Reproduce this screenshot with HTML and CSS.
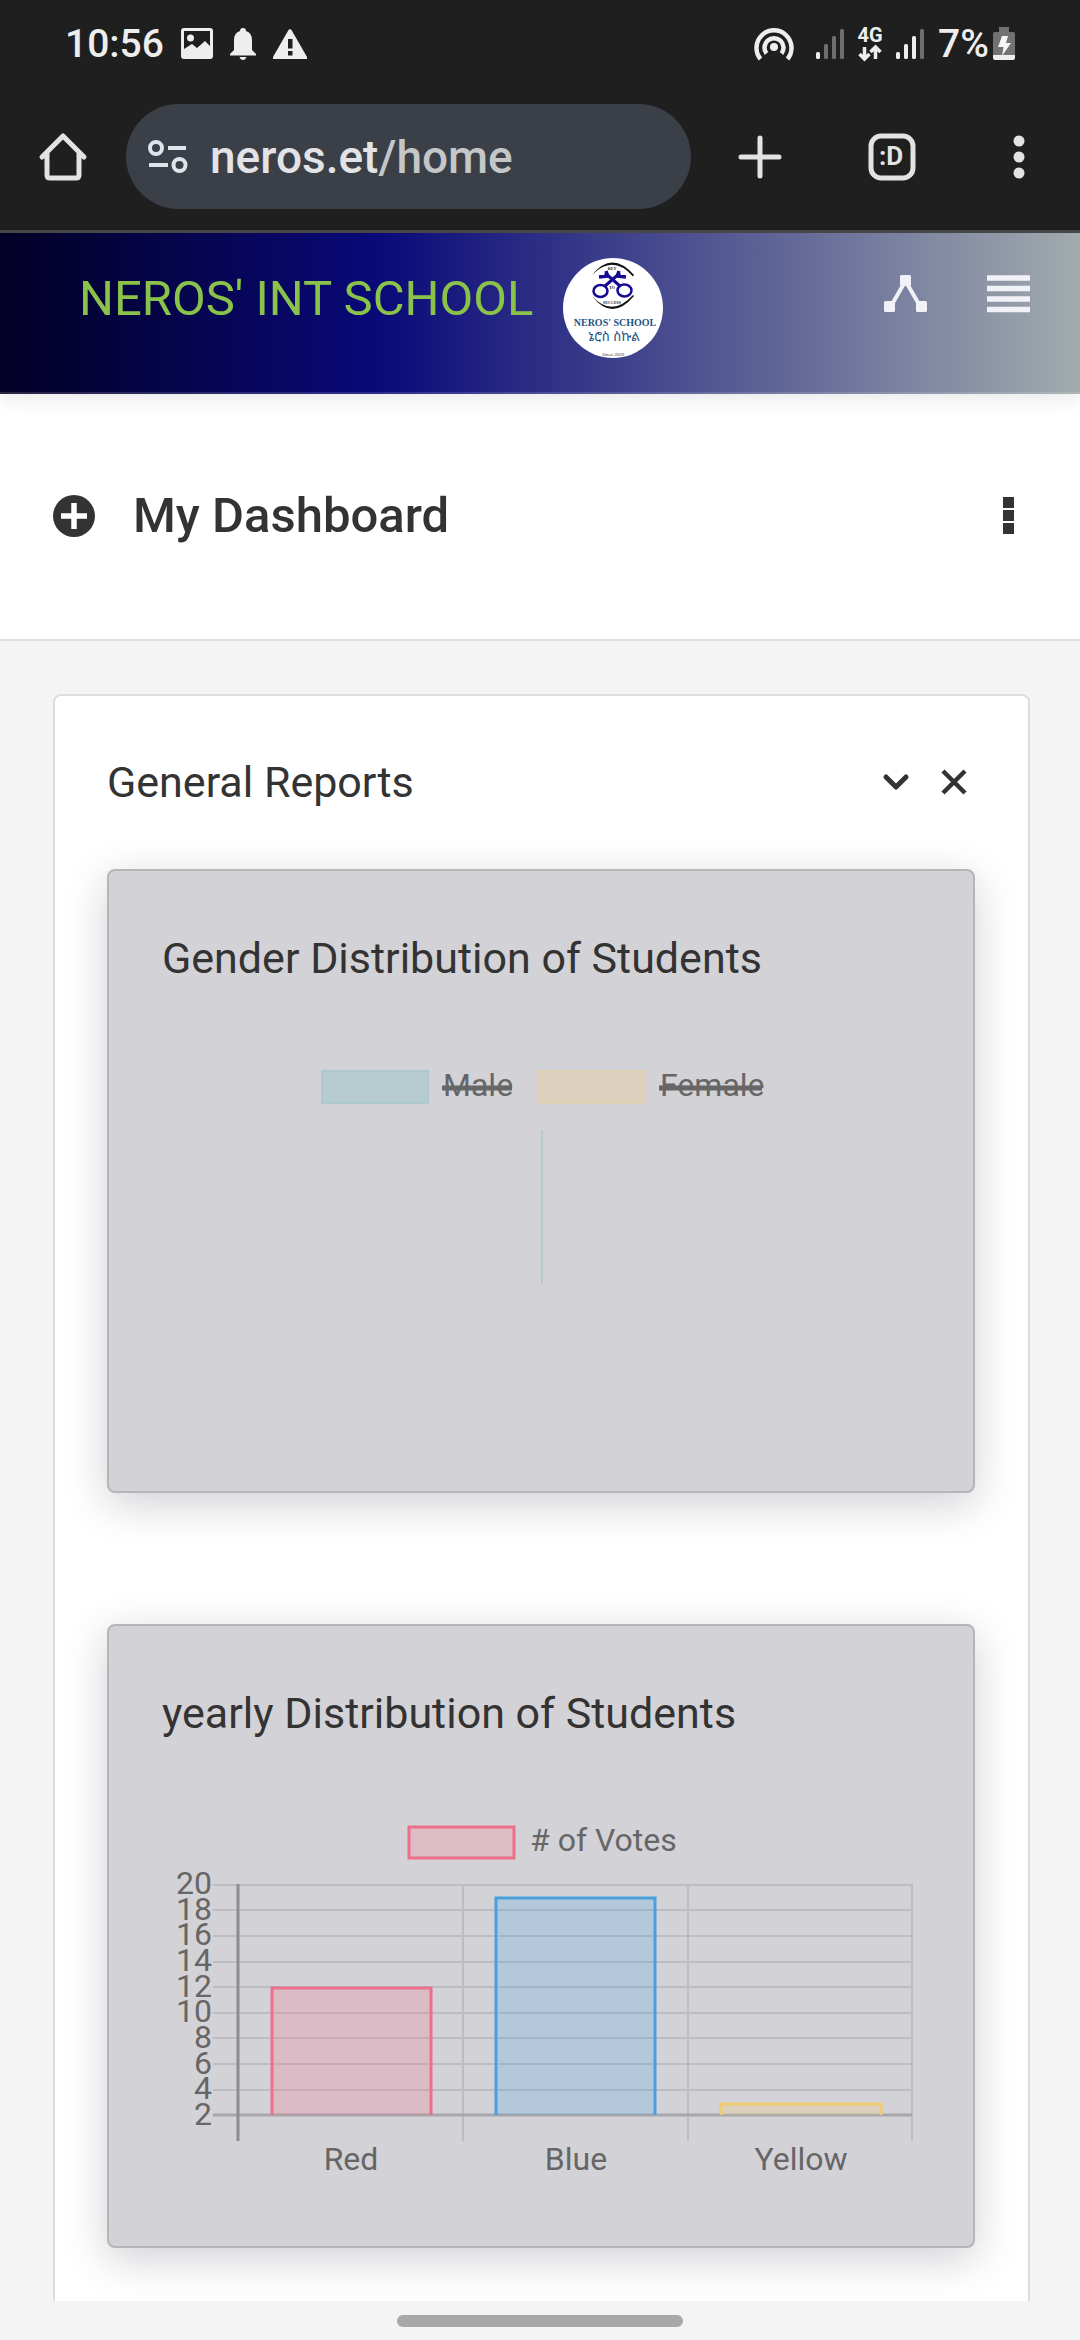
FILE: index.html
```html
<!DOCTYPE html>
<html lang="en">
<head>
<meta charset="utf-8">
<meta name="viewport" content="width=device-width, initial-scale=1">
<title>My Dashboard</title>
<link rel="stylesheet" href="styles.css">
</head>
<body>
<div class="status">
  <div class="status-left">
    <span class="status-text">10:56</span>
    <svg width="32" height="32" viewBox="0 0 32 32"><path fill="#eee" fill-rule="evenodd" d="M3 0H29Q32 0 32 3V28Q32 31 29 31H3Q0 31 0 28V3Q0 0 3 0ZM3 3V21L11 16L16 20L24 13L29 18V3Z"/><circle cx="9.500" cy="10" r="3.500" fill="#eee"/></svg>
    <svg width="26" height="32" viewBox="0 0 26 32"><path fill="#eee" d="M13 0Q16 0 16 3Q22 5 22 12V22L26 26V27.500H0V26L4 22V12Q4 5 10 3Q10 0 13 0ZM9.500 29H16.500Q15.500 32 13 32Q10.500 32 9.500 29Z"/></svg>
    <svg width="34" height="30" viewBox="0 0 34 30"><path fill="#eee" fill-rule="evenodd" d="M17 0L18.500 1L34 28V30H0V28L15.500 1ZM15 10V19.500H19.500V10ZM15 22V26.500H19.500V22Z"/></svg>
  </div>
  <div class="status-right">
    <svg class="hotspot" width="40" height="36" viewBox="0 0 40 36"><g fill="none" stroke="#eee" stroke-width="4.500"><path d="M6.500 33A17.500 17.500 0 1 1 33.500 33"/><path d="M12.500 27.500A9.500 9.500 0 1 1 27.500 27.500"/></g><circle cx="20" cy="21" r="4" fill="#eee"/></svg>
    <svg width="28" height="32" viewBox="0 0 28 32"><rect x="0" y="24" width="4" height="7" rx="1.500" fill="#eee"/><g fill="#6f6f6f"><rect x="8" y="16" width="4" height="15" rx="1.500"/><rect x="16" y="8" width="4" height="23" rx="1.500"/><rect x="24" y="1" width="4" height="30" rx="1.500"/></g></svg>
    <svg width="24" height="36" viewBox="0 0 24 36"><text x="12" y="16" text-anchor="middle" class="net">4G</text><path d="M6.500 21V33M1.500 28L6.500 33L11.500 28M17.500 33V22M12.500 26L17.500 21L22.500 26" fill="none" stroke="#eee" stroke-width="3.500"/></svg>
    <svg width="28" height="32" viewBox="0 0 28 32"><g fill="#eee"><rect x="0" y="24" width="4" height="7" rx="1.500"/><rect x="8" y="16" width="4" height="15" rx="1.500"/><rect x="16" y="8" width="4" height="23" rx="1.500"/></g><rect x="24" y="1" width="4" height="30" rx="1.500" fill="#6f6f6f"/></svg>
    <span class="battery"><span class="status-text">7%</span>
    <svg width="22" height="34" viewBox="0 0 22 34"><path fill="#727272" d="M6 0H16V5H20Q22 5 22 7V28H0V7Q0 5 2 5H6Z"/><path fill="#eee" d="M0 28H22V31Q22 33 20 33H2Q0 33 0 31Z"/><path fill="#f5f5f5" d="M9 9H15L13 16H18L9 29L10.500 20H5Z"/></svg></span>
  </div>
</div>
<div class="toolbar">
  <button class="tool tool-home" aria-label="Home"><svg width="48" height="48" viewBox="0 0 48 48"><path d="M3 24L24 3L45 24M8 20V42Q8 45 11 45H37Q40 45 40 42V20" fill="none" stroke="#e3e3e3" stroke-width="5" stroke-linecap="round" stroke-linejoin="round"/></svg></button>
  <button class="address"><svg width="40" height="34" viewBox="0 0 40 34"><g fill="none" stroke="#dfe3ea" stroke-width="4"><circle cx="8" cy="8" r="6"/><path d="M20 8H38M1 25H20"/><circle cx="31.500" cy="25" r="6"/></g></svg><span class="url">neros.et<span class="path">/home</span></span></button>
  <button class="tool" aria-label="New tab"><svg width="44" height="44" viewBox="0 0 44 44"><path d="M22 3V41M3 22H41" stroke="#e3e3e3" stroke-width="5" stroke-linecap="round"/></svg></button>
  <button class="tool" aria-label="Tabs"><svg width="48" height="48" viewBox="0 0 48 48"><rect x="3" y="3" width="42" height="42" rx="10" fill="none" stroke="#e3e3e3" stroke-width="5"/><text x="23" y="32" text-anchor="middle" class="tabs">:D</text></svg></button>
  <button class="tool tool-more" aria-label="More"><svg width="12" height="44" viewBox="0 0 12 44"><g fill="#e3e3e3"><circle cx="6" cy="6" r="5.500"/><circle cx="6" cy="22" r="5.500"/><circle cx="6" cy="38" r="5.500"/></g></svg></button>
</div>
<div class="page">
  <header class="site">
    <a class="brand" href="#">NEROS' INT SCHOOL</a>
    <svg class="logo" width="100" height="100" viewBox="0 0 100 100" role="img" aria-label="Neros' School">
      <circle cx="50" cy="50" r="50" fill="#fff"/>
      <g fill="#111"><path d="M29 17Q49 -8 71 17L70 18.500Q50 -4 29 17Z"/><path d="M29 38Q49 64 71 38L70 37Q49 60 29 38Z"/></g>
      <g fill="none" stroke="#150a91"><ellipse cx="37.500" cy="33" rx="7" ry="6" stroke-width="2.500"/><ellipse cx="61.500" cy="32.500" rx="7" ry="6" stroke-width="2.500"/><path d="M42 28L57 15M57 28L42 15" stroke-width="3"/><path d="M36 19L45 18M43 13L45 19M63 19L54 18M56 13L54 19" stroke-width="3.500"/></g>
      <text x="49" y="12" class="mark">KEY</text>
      <text x="49" y="31" class="mark">TO</text>
      <text x="49" y="46" class="mark">SUCCESS</text>
      <text x="52" y="68" class="mark-name">NEROS' SCHOOL</text>
      <text x="51" y="83" class="mark-am">ኔሮስ ስኩል</text>
      <text x="50" y="98" class="mark-year">Since 2020</text>
    </svg>
    <div class="site-actions">
      <button class="icon-btn" aria-label="Quick links"><svg width="44" height="38" viewBox="0 0 44 38"><path d="M7 31L21.500 6L36 31" fill="none" stroke="#f1f2f8" stroke-width="4"/><g fill="#f1f2f8"><rect x="16" y="0" width="11" height="11" rx="1.500"/><rect x="0" y="26" width="11" height="11" rx="1.500"/><rect x="32" y="26" width="11" height="11" rx="1.500"/></g></svg></button>
      <button class="icon-btn" aria-label="Menu"><svg width="44" height="38" viewBox="0 0 44 38"><path d="M0 3H43M0 13.500H43M0 24H43M0 34.500H43" stroke="#f1f2f8" stroke-width="5.500"/></svg></button>
    </div>
  </header>
  <div class="heading">
    <svg width="42" height="42" viewBox="0 0 42 42"><circle cx="21" cy="21" r="21" fill="#333"/><path d="M21 8V34M8 21H34" stroke="#fff" stroke-width="5.500"/></svg>
    <h1>My Dashboard</h1>
    <button class="icon-btn" aria-label="Options"><svg width="11" height="37" viewBox="0 0 11 37"><path fill="#333" d="M0 0H11V11H0ZM0 13H11V24H0ZM0 26H11V37H0Z"/></svg></button>
  </div>
  <main>
    <section class="panel">
      <div class="panel-head">
        <h2>General Reports</h2>
        <button class="icon-btn" aria-label="Collapse"><svg width="26" height="26" viewBox="0 0 26 26"><path d="M3 8L13 18L23 8" fill="none" stroke="#333" stroke-width="5" stroke-linecap="round" stroke-linejoin="round"/></svg></button>
        <button class="icon-btn" aria-label="Close"><svg width="26" height="26" viewBox="0 0 26 26"><path d="M2 2L24 24M24 2L2 24" stroke="#333" stroke-width="4.500"/></svg></button>
      </div>
      <article class="card">
        <h2>Gender Distribution of Students</h2>
        <svg class="chart" viewBox="0 0 758 379" role="img" aria-label="Gender distribution">
          <rect x="160" y="12" width="106" height="32" fill="#b7cccf" stroke="#accacb" stroke-width="2"/>
          <text x="281" y="37" class="label">Male</text>
          <rect x="377" y="12" width="106" height="32" fill="#dcd1bd" stroke="#dfd2b7" stroke-width="2"/>
          <text x="498" y="37" class="label">Female</text>
          <path d="M280 29H350M497 29H600" stroke="#666" stroke-width="5"/>
          <path d="M380 71V225" stroke="#b9cacf" stroke-width="2"/>
        </svg>
      </article>
      <article class="card">
        <h2>yearly Distribution of Students</h2>
        <svg class="chart" viewBox="0 0 758 379" role="img" aria-label="Number of votes">
          <rect x="247" y="13" width="105" height="31" fill="#dcbcc5" stroke="#ec7089" stroke-width="3"/>
          <text x="368" y="37" class="label"># of Votes</text>
          <g class="grid"><path d="M51 71H750M51 96H750M51 122H750M51 148H750M51 173H750M51 199H750M51 224H750M51 250H750M51 276H750"/><path d="M301 70V327M526 70V327M750 70V327"/></g>
          <path d="M51 301H750" stroke="#a8a7ac" stroke-width="3"/>
          <path d="M76 70V327" stroke="#8d8c90" stroke-width="3"/>
          <g class="label end"><text x="50" y="80">20</text><text x="50" y="106">18</text><text x="50" y="131">16</text><text x="50" y="157">14</text><text x="50" y="183">12</text><text x="50" y="208">10</text><text x="50" y="234">8</text><text x="50" y="260">6</text><text x="50" y="285">4</text><text x="50" y="311">2</text></g>
          <g stroke-width="3"><path class="red" d="M110 301V174H269V301"/><path class="blue" d="M334 301V84H493V301"/><path class="yellow" d="M559 301V290H719V301"/></g>
          <g class="label mid"><text x="189" y="356">Red</text><text x="414" y="356">Blue</text><text x="639" y="356">Yellow</text></g>
        </svg>
      </article>
    </section>
  </main>
</div>
<div class="gesture"><span></span></div>
</body>
</html>
```
FILE: styles.css
```css
* { box-sizing: border-box; }
body {
  margin: 0;
  height: 100vh;
  display: flex;
  flex-direction: column;
  font-family: Roboto, "Liberation Sans", sans-serif;
  color: #333;
  background: #f4f4f4;
}
svg { display: block; flex: none; overflow: visible; }
button { border: 0; padding: 0; background: none; font: inherit; color: inherit; }
h1, h2 { margin: 0; }

.status {
  flex: none;
  height: 88px;
  padding: 0 65px;
  display: flex;
  justify-content: space-between;
  align-items: center;
  background: #1f1f1f;
  color: #eee;
}
.status-left { display: flex; align-items: center; gap: 17px; }
.status-right { display: flex; align-items: center; gap: 14px; }
.status-text { font-size: 39px; font-weight: 500; line-height: 48px; }
.hotspot { margin-right: 8px; }
.battery { display: flex; align-items: center; gap: 4px; }
.net { font-size: 20px; font-weight: 700; fill: #eee; }

.toolbar {
  flex: none;
  display: flex;
  align-items: center;
  padding: 16px 0 21px;
  background: #1f1f1f;
  border-bottom: 3px solid #47474a;
}
.tool { width: 132px; display: flex; justify-content: center; }
.tool-home { width: 126px; }
.tool-more { width: 122px; }
.tabs { font-size: 26px; font-weight: 700; fill: #e3e3e3; }
.address {
  flex: 1;
  height: 105px;
  margin-right: 3px;
  padding: 0 22px;
  display: flex;
  align-items: center;
  gap: 22px;
  border-radius: 53px;
  background: #3b4048;
  color: #e3e3e6;
}
.url { font-size: 46px; font-weight: 500; line-height: 56px; }
.path { color: #c4c7c7; }

.page { flex: 1; min-height: 0; overflow: auto; scrollbar-width: none; }
.site {
  position: relative;
  display: flex;
  align-items: flex-start;
  padding: 25px 49px 34px 79px;
  border-bottom: 2px solid rgba(255, 255, 255, 0.15);
  background: linear-gradient(90deg, #020024 0%, #090979 35%, #a2abad 100%) border-box;
  box-shadow: 0 4px 20px rgba(0, 0, 0, 0.1);
}
.brand { font-size: 49px; line-height: 82px; color: #8bc34a; text-decoration: none; }
.logo { margin-left: 30px; }
.mark { font: 700 4px "Liberation Serif", serif; fill: #222; text-anchor: middle; }
.mark-name { font: 700 10px "Liberation Serif", serif; fill: #1f5286; text-anchor: middle; }
.mark-am { font: 13px "Noto Sans", "Noto Sans Ethiopic", sans-serif; fill: #1f5286; text-anchor: middle; }
.mark-year { font: italic 5px "Liberation Serif", serif; fill: #444; text-anchor: middle; }
.site-actions { margin-left: auto; display: flex; gap: 59px; }
.icon-btn { height: 72px; display: flex; align-items: center; }

.heading {
  height: 247px;
  padding: 0 66px 2px 53px;
  display: flex;
  align-items: center;
  background: #fff;
  border-bottom: 2px solid #ddd;
}
.heading h1 { flex: 1; margin-left: 38px; font-size: 49px; font-weight: 500; line-height: 60px; }

main { padding: 53px 50px 53px 53px; }
.panel { padding: 50px 53px 0 52px; background: #fff; border: 2px solid #ddd; border-radius: 8px; }
.panel-head { display: flex; align-items: center; gap: 32px; margin-bottom: 51px; padding-right: 8px; }
.panel-head h2 { flex: 1; }
h2 { font-size: 43px; font-weight: 400; line-height: 72px; }
.card {
  margin-bottom: 131px;
  padding: 51px 53px 53px;
  background: #d3d2d7;
  border: 2px solid #b6b5ba;
  border-radius: 8px;
  box-shadow: 0 11px 43px rgba(20, 20, 40, 0.2);
}
.chart { width: 100%; margin-top: 65px; }
.label { font-size: 32px; fill: #666; }
.end { text-anchor: end; }
.mid { text-anchor: middle; }
.grid { stroke: #bdbcc1; stroke-width: 2px; }
.red { fill: rgba(255, 99, 132, 0.2); stroke: #ec7089; }
.blue { fill: rgba(54, 162, 235, 0.2); stroke: #4a9fdd; }
.yellow { fill: rgba(255, 206, 86, 0.2); stroke: #efcc71; }

.gesture { flex: none; height: 39px; padding-top: 14px; background: #f4f4f4; }
.gesture span { display: block; width: 286px; height: 12px; margin: 0 auto; border-radius: 6px; background: #a8a8a8; }
```
